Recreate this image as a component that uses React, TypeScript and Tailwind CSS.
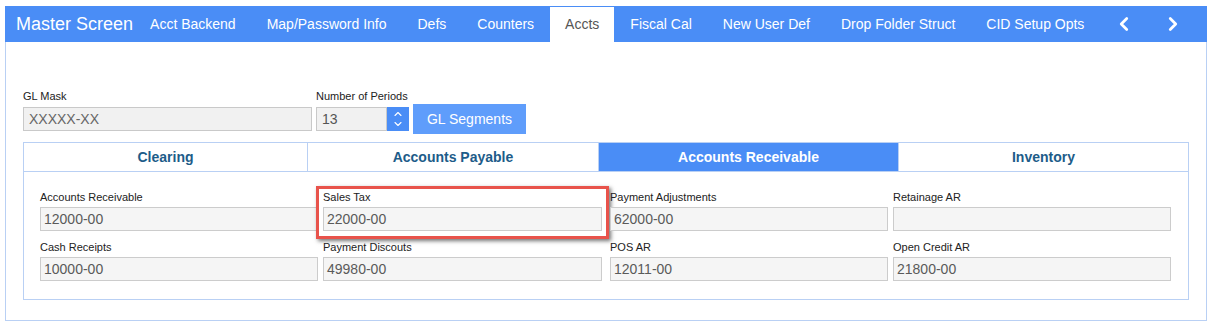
import { ChevronLeft, ChevronRight, ChevronUp, ChevronDown } from "lucide-react";

const topTabs = [
  "Acct Backend",
  "Map/Password Info",
  "Defs",
  "Counters",
  "Accts",
  "Fiscal Cal",
  "New User Def",
  "Drop Folder Struct",
  "CID Setup Opts",
];

const subTabs = [
  { label: "Clearing", w: "w-[284px]" },
  { label: "Accounts Payable", w: "w-[291px]" },
  { label: "Accounts Receivable", w: "w-[300px]" },
  { label: "Inventory", w: "flex-1" },
];

type Field = { label: string; value: string; highlight?: boolean };

// column by column, two rows each
const columns: Field[][] = [
  [
    { label: "Accounts Receivable", value: "12000-00" },
    { label: "Cash Receipts", value: "10000-00" },
  ],
  [
    { label: "Sales Tax", value: "22000-00", highlight: true },
    { label: "Payment Discouts", value: "49980-00" },
  ],
  [
    { label: "Payment Adjustments", value: "62000-00" },
    { label: "POS AR", value: "12011-00" },
  ],
  [
    { label: "Retainage AR", value: "" },
    { label: "Open Credit AR", value: "21800-00" },
  ],
];

const colWidths = ["w-[283px]", "w-[287px]", "w-[283px]", "w-[278px]"];

export default function App() {
  return (
    <div className="h-[324px] w-[1213px] bg-white pl-[5px] pt-[6px] font-['Liberation_Sans',Arial,sans-serif]">
      <div className="h-[315px] w-[1202px] border-x border-b border-[#b9d0f4]">
        {/* header bar */}
        <div className="-mx-px flex h-[36px] items-center gap-px bg-[#4a8df6] text-white">
          <span className="ml-[11px] mr-[1px] text-[18px] leading-none">Master Screen</span>
          {topTabs.map((t) =>
            t === "Accts" ? (
              <span
                key={t}
                className="mt-px flex h-[35px] items-center self-end bg-white px-[15px] text-[14px] text-[#555]"
              >
                {t}
              </span>
            ) : (
              <span key={t} className="px-[15px] text-[14px]">
                {t}
              </span>
            )
          )}
          <span className="flex w-[48px] justify-center">
            <ChevronLeft size={22} strokeWidth={3} />
          </span>
          <span className="flex w-[48px] justify-center">
            <ChevronRight size={22} strokeWidth={3} />
          </span>
        </div>

        <div className="pl-[17px] pt-[48px]">
          {/* GL mask row */}
          <div className="flex gap-[4px]">
            <div>
              <div className="mb-px text-[11px] leading-[13px] text-[#222]">GL Mask</div>
              <div className="flex h-[30px] items-center">
                <div className="flex h-[24px] w-[289px] items-center border border-[#c9c9c9] bg-[#f1f1f1] pl-[5px] text-[14px] text-[#666]">
                  XXXXX-XX
                </div>
              </div>
            </div>
            <div>
              <div className="mb-px text-[11px] leading-[13px] text-[#222]">Number of Periods</div>
              <div className="flex h-[30px] items-center">
                <div className="flex h-[24px] w-[71px] items-center border border-[#c9c9c9] bg-[#f1f1f1] pl-[5px] text-[14px] text-[#555]">
                  13
                </div>
                <div className="flex h-[24px] w-[22px] flex-col items-center justify-center bg-[#4a8df6] text-white">
                  <ChevronUp size={12} strokeWidth={2.2} className="-mb-[1px]" />
                  <ChevronDown size={12} strokeWidth={2.2} className="-mt-[1px]" />
                </div>
                <button className="ml-[4px] h-[30px] w-[113px] bg-[#5f9dfb] text-[14px] text-white">
                  GL Segments
                </button>
              </div>
            </div>
          </div>

          {/* account sub tabs */}
          <div className="mt-[8px] h-[158px] w-[1166px] border border-[#b9d0f4]">
            <div className="flex h-[29px] border-b border-[#b9d0f4]">
              {subTabs.map((s, i) => (
                <div
                  key={s.label}
                  className={[
                    "flex items-center justify-center text-[14px] font-bold",
                    s.w,
                    i < 3 ? "border-r border-[#b9d0f4]" : "",
                    s.label === "Accounts Receivable"
                      ? "bg-[#4a8df6] text-white"
                      : "text-[#1d5c89]",
                  ].join(" ")}
                >
                  {s.label}
                </div>
              ))}
            </div>

            <div className="flex pl-[16px] pt-[19px]">
              {columns.map((col, ci) => (
                <div key={ci} className={`flex flex-col gap-[10px] ${colWidths[ci]}`}>
                  {col.map((f) => (
                    <FieldBox key={f.label} field={f} wide={ci === 1} />
                  ))}
                </div>
              ))}
            </div>
          </div>
        </div>
      </div>
    </div>
  );
}

function FieldBox({ field, wide }: { field: Field; wide: boolean }) {
  return (
    <div className="relative">
      {field.highlight && (
        <div className="absolute -left-[7px] -top-[5px] h-[53px] w-[293px] border-[3px] border-[#e8534b] shadow-[2px_2px_4px_rgba(0,0,0,0.55)]" />
      )}
      <div className="mb-[3px] text-[11px] leading-[13px] text-[#222]">{field.label}</div>
      <div
        className={`flex h-[24px] items-center border border-[#cccccc] bg-[#f5f5f5] pl-[3px] text-[14px] text-[#5a5a5a] ${
          wide ? "w-[279px]" : "w-[278px]"
        }`}
      >
        {field.value}
      </div>
    </div>
  );
}
